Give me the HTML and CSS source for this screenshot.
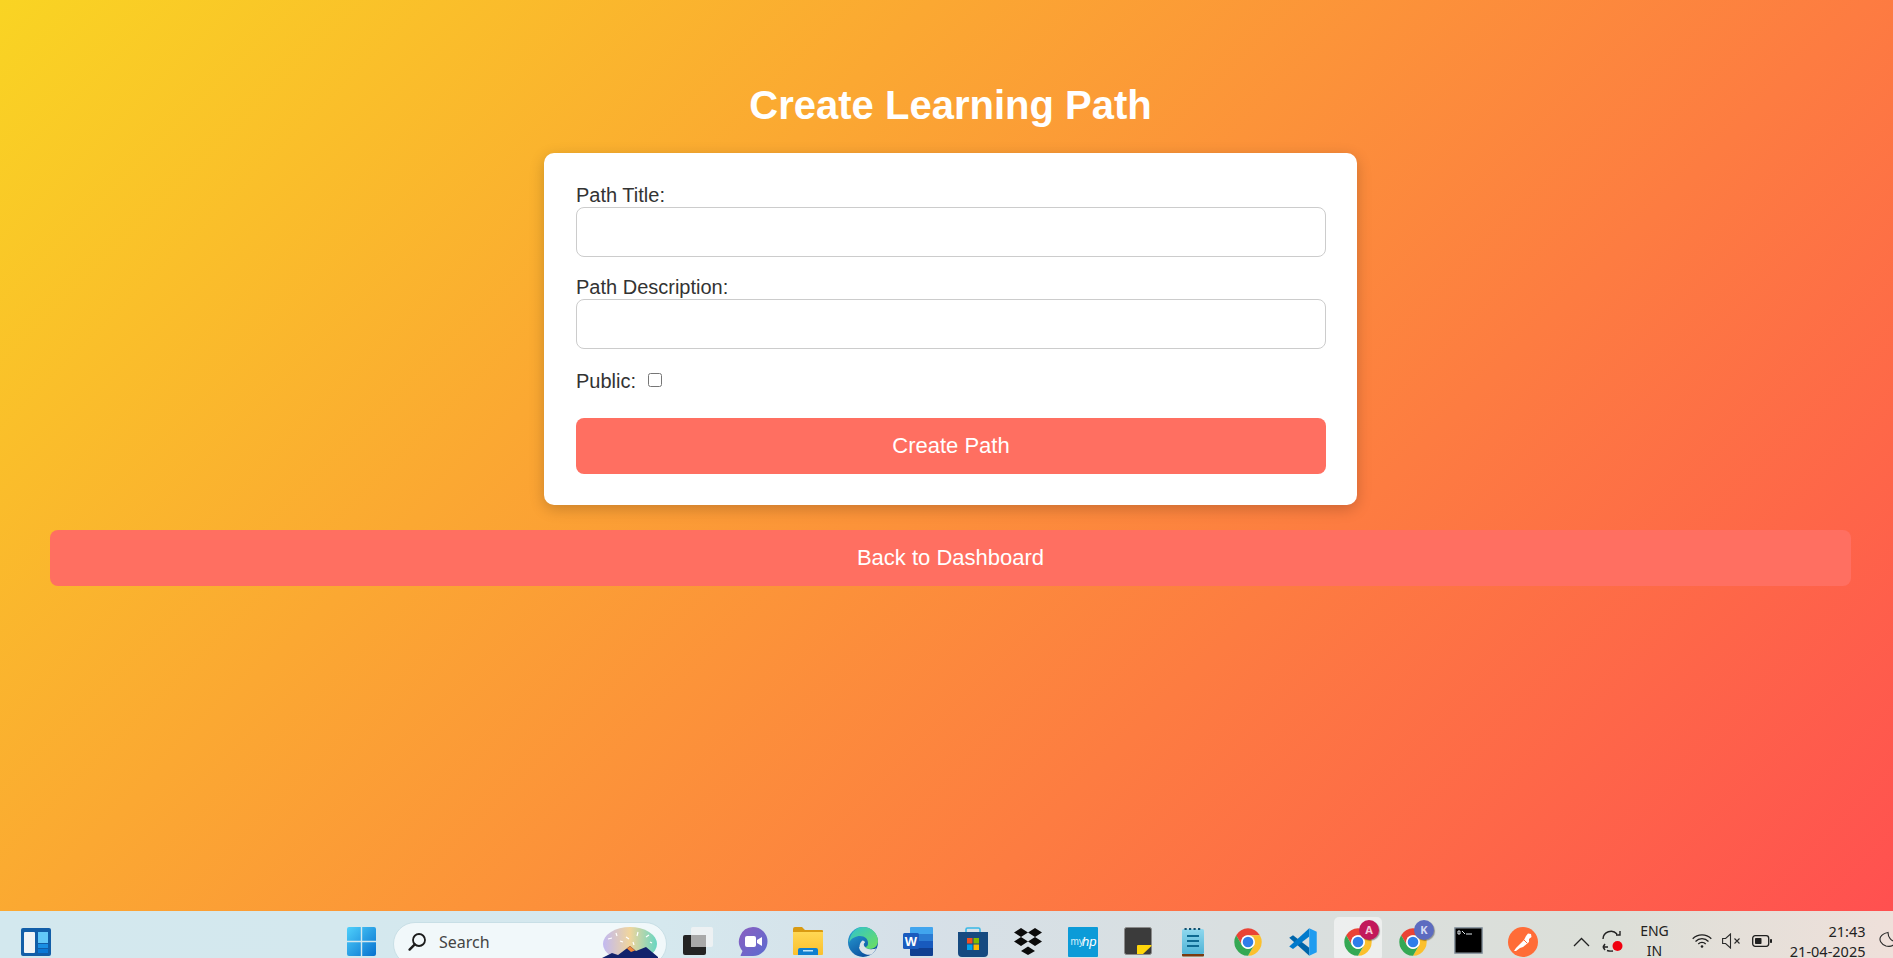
FILE: index.html
```html
<!DOCTYPE html>
<html lang="en">
<head>
  <meta charset="UTF-8">
  <title>Create Learning Path</title>
  <link rel="stylesheet" href="styles.css">
</head>
<body>

  <svg class="defs" width="0" height="0">
    <defs>
      <symbol id="chrome" viewBox="0 0 48 48">
        <path fill="#ea4335" d="M5 13A22 22 0 0 1 43 13H24A11 11 0 0 0 14.5 29.5Z"/>
        <path fill="#fbc02d" d="M43 13A22 22 0 0 1 24 46L33.5 29.5A11 11 0 0 0 24 13Z"/>
        <path fill="#34a853" d="M24 46A22 22 0 0 1 5 13L14.5 29.5A11 11 0 0 0 33.5 29.5Z"/>
        <circle cx="24" cy="24" r="11" fill="#fff"/>
        <circle cx="24" cy="24" r="8.5" fill="#2f7de9"/>
      </symbol>
      <linearGradient id="startBlue" x1="0" y1="0" x2="1" y2="1">
        <stop offset="0" stop-color="#4fd0fb"/>
        <stop offset="1" stop-color="#0671cf"/>
      </linearGradient>
      <linearGradient id="edgeBlue" x1="0" y1="0" x2="0.6" y2="1">
        <stop offset="0" stop-color="#2ba5d8"/>
        <stop offset="1" stop-color="#0a4f9e"/>
      </linearGradient>
      <linearGradient id="edgeGreen" x1="0" y1="0" x2="1" y2="1">
        <stop offset="0" stop-color="#2fc2d0"/>
        <stop offset="1" stop-color="#6fe05a"/>
      </linearGradient>
      <linearGradient id="folderFill" x1="0" y1="0" x2="0" y2="1">
        <stop offset="0" stop-color="#ffd754"/>
        <stop offset="1" stop-color="#fbc02d"/>
      </linearGradient>
      <linearGradient id="pageFill" x1="0" y1="0" x2="0" y2="1">
        <stop offset="0" stop-color="#8fd8ee"/>
        <stop offset="1" stop-color="#4fb3d6"/>
      </linearGradient>
      <linearGradient id="meetFill" x1="0" y1="0" x2="1" y2="1">
        <stop offset="0" stop-color="#8a5fc0"/>
        <stop offset="1" stop-color="#5b6bd0"/>
      </linearGradient>
      <linearGradient id="spark" x1="0" y1="0" x2="1" y2="0">
        <stop offset="0" stop-color="#b9aef0"/>
        <stop offset="0.5" stop-color="#f0cf8c"/>
        <stop offset="1" stop-color="#4fd0b8"/>
      </linearGradient>
    </defs>
  </svg>

  <main class="page">
    <h1 class="page-title">Create Learning Path</h1>

    <form class="form-card">
      <label class="field-label" for="path_title">Path Title:</label>
      <input class="field-input" id="path_title" type="text" name="title">

      <label class="field-label field-gap" for="path_desc">Path Description:</label>
      <input class="field-input" id="path_desc" type="text" name="description">

      <div class="public-row">
        <label class="public-label" for="is_public">Public:</label>
        <input class="public-check" id="is_public" type="checkbox" name="public">
      </div>

      <button class="action-btn" type="submit">Create Path</button>
    </form>

    <a class="action-btn back-link" href="#">Back to Dashboard</a>
  </main>

  <footer class="taskbar">
    <div class="widgets">
      <svg width="30" height="28" viewBox="0 0 30 28">
        <rect width="30" height="28" rx="2" fill="#125ea8"/>
        <rect x="3" y="4" width="11" height="21" rx="1" fill="#f1f4f6"/>
        <rect x="17" y="4" width="10" height="11" fill="#62c8f8"/>
        <rect x="17" y="16" width="10" height="4" fill="#1a8fe3"/>
        <rect x="17" y="21" width="10" height="4" fill="#0b78d6"/>
      </svg>
    </div>

    <div class="start-btn">
      <svg width="29" height="29" viewBox="0 0 29 29">
        <path fill="url(#startBlue)" d="M0 2a2 2 0 0 1 2-2h11.8v13.8H0zM15.2 0H27a2 2 0 0 1 2 2v11.8H15.2zM0 15.2h13.8V29H2a2 2 0 0 1-2-2zM15.2 15.2H29V27a2 2 0 0 1-2 2H15.2z"/>
      </svg>
    </div>

    <div class="search-box">
      <svg width="19" height="19" viewBox="0 0 19 19" fill="none" stroke="#1c1c1c">
        <circle cx="11" cy="8" r="6" stroke-width="1.8"/>
        <path d="M6.8 12.4 1.6 17.6" stroke-width="2.4" stroke-linecap="round"/>
      </svg>
      <span class="search-text">Search</span>
      <svg class="search-art" width="56" height="34" viewBox="0 0 56 34">
        <ellipse cx="28" cy="17" rx="27" ry="17" fill="url(#spark)" opacity="0.85"/>
        <path d="M6 12l4-1M14 6l1 3M24 10l3 2M36 5l-1 4M44 10l3-2M31 15l1 3M18 14l3 1M48 15l2 1" stroke="#fff" stroke-width="1.2"/>
        <path fill="#12226b" d="M0 31 10 26 16 28 28 19 34 24 44 20 56 30V34H0Z"/>
        <path fill="#f08a3c" d="M25 21.500 28 19 33 23.500 29 25Z"/>
      </svg>
    </div>

    <div class="apps">
      <div class="app">
        <div class="app-inner">
          <svg width="30" height="28" viewBox="0 0 30 28">
            <rect x="0" y="8" width="23" height="20" rx="2" fill="#232323"/>
            <rect x="8" y="0" width="22" height="20" rx="2" fill="#f4f4f4" opacity="0.75"/>
            <rect x="8" y="8" width="15" height="12" fill="#a9a9a9"/>
          </svg>
        </div>
      </div>

      <div class="app">
        <div class="app-inner">
          <svg width="30" height="30" viewBox="0 0 30 30">
            <path fill="url(#meetFill)" d="M15 0a14.500 14.500 0 0 1 0 29H3.500Q2 29 3 27.500L4.500 24A14.500 14.500 0 0 1 15 0Z"/>
            <rect x="7" y="9" width="11" height="11" rx="2" fill="#fff"/>
            <path fill="#fff" d="M19 13l5-3v9l-5-3z"/>
          </svg>
        </div>
      </div>

      <div class="app">
        <div class="app-inner">
          <svg width="30" height="28" viewBox="0 0 30 28">
            <path fill="#d99a12" d="M0 2a2 2 0 0 1 2-2h7l3 3h17a1 1 0 0 1 1 1v5H0z"/>
            <path fill="url(#folderFill)" d="M0 5h30v22a1 1 0 0 1-1 1H1a1 1 0 0 1-1-1z"/>
            <path fill="#0f7fcf" d="M5 28v-5a2 2 0 0 1 2-2h16a2 2 0 0 1 2 2v5z"/>
            <rect x="10" y="23" width="10" height="1.500" fill="#bfe4f7"/>
          </svg>
        </div>
      </div>

      <div class="app">
        <div class="app-inner">
          <svg width="30" height="30" viewBox="0 0 30 30">
            <circle cx="15" cy="15" r="15" fill="url(#edgeBlue)"/>
            <path fill="url(#edgeGreen)" d="M15 0c8 0 15 6 15 14 0 5-4 8-8 8-3 0-5-1-5-2 2 0 3-1.500 3-4 0-4-3-7-8-7-4 0-9 2-11 7C2 6 8 0 15 0Z"/>
            <path fill="#dbe3e8" d="M11.500 20c0-3 1-5 3-6.500 1.500 0 2.500 1 2.500 2-1 .5-1.500 1.500-1 3 1 3 5 4.500 9 3.500 2 0 3-.5 3.500-1-1.500 3-3 5-5 6.500-5 1.500-12-2-12.500-7.500Z"/>
          </svg>
        </div>
      </div>

      <div class="app">
        <div class="app-inner">
          <svg width="30" height="29" viewBox="0 0 30 29">
            <rect x="7" y="0" width="23" height="8" rx="1" fill="#41a5ee"/>
            <rect x="7" y="7" width="23" height="7" fill="#2b7cd3"/>
            <rect x="7" y="14" width="23" height="7" fill="#185abd"/>
            <path fill="#103f91" d="M7 21h23v7a1 1 0 0 1-1 1H8a1 1 0 0 1-1-1z"/>
            <rect x="0" y="6" width="16" height="16" rx="1.500" fill="#1a5bbe"/>
            <text class="word-letter" x="8" y="18.500" text-anchor="middle">W</text>
          </svg>
        </div>
      </div>

      <div class="app">
        <div class="app-inner">
          <svg width="30" height="30" viewBox="0 0 30 30">
            <path fill="none" stroke="#39b8e6" stroke-width="1.600" d="M8 5V2.500Q8 1 9.500 1h11Q22 1 22 2.500V5"/>
            <path fill="#164a80" d="M0 5h30v21a4 4 0 0 1-4 4H4a4 4 0 0 1-4-4z"/>
            <rect x="9" y="11" width="5.500" height="5.500" fill="#f25022"/>
            <rect x="15.500" y="11" width="5.500" height="5.500" fill="#7fba00"/>
            <rect x="9" y="17.500" width="5.500" height="5.500" fill="#00a4ef"/>
            <rect x="15.500" y="17.500" width="5.500" height="5.500" fill="#ffb900"/>
          </svg>
        </div>
      </div>

      <div class="app">
        <div class="app-inner">
          <svg width="30" height="28" viewBox="0 0 30 28">
            <path fill="#0b0b0b" d="M8 1 15 5.500 8 10 1 5.500ZM22 1 29 5.500 22 10 15 5.500ZM8 10 15 14.500 8 19 1 14.500ZM22 10 29 14.500 22 19 15 14.500ZM15 19.500 22 24 15 28 8 24Z"/>
          </svg>
        </div>
      </div>

      <div class="app">
        <div class="app-inner">
          <svg width="30" height="30" viewBox="0 0 30 30">
            <rect width="30" height="30" rx="1" fill="#0c9bd8"/>
            <text class="hp-my" x="2.500" y="18">my</text>
            <text class="hp-hp" x="14" y="19">hp</text>
          </svg>
        </div>
      </div>

      <div class="app">
        <div class="app-inner">
          <svg width="28" height="28" viewBox="0 0 28 28">
            <rect x="0.500" y="0.500" width="27" height="27" rx="2" fill="#3b3b3b" stroke="#8a8a8a"/>
            <path fill="#ffd60a" d="M13 27V19a1 1 0 0 1 1-1h13.500V19L19 27Z"/>
          </svg>
        </div>
      </div>

      <div class="app">
        <div class="app-inner">
          <svg width="22" height="30" viewBox="0 0 22 30">
            <rect y="2" width="22" height="25" rx="1.500" fill="url(#pageFill)"/>
            <path fill="#7a3b10" d="M0 27h22v1.500a1 1 0 0 1-1 1H1a1 1 0 0 1-1-1z"/>
            <path stroke="#14506f" stroke-width="2" stroke-dasharray="2.200 2.300" d="M2.500 2h18"/>
            <path stroke="#0d6a92" stroke-width="2" d="M5 9h12M5 14h12M5 19h12"/>
          </svg>
        </div>
      </div>

      <div class="app">
        <div class="app-inner">
          <svg width="30" height="30"><use href="#chrome"/></svg>
        </div>
      </div>

      <div class="app">
        <div class="app-inner">
          <svg width="30" height="30" viewBox="0 0 24 24">
            <path fill="#0065a9" d="M17 23V16.500L4 6.500 1 8.500Z"/>
            <path fill="#007acc" d="M17 1V7.500L4 17.500 1 15.500Z"/>
            <path fill="#1f9cf0" d="M17 1 23 3.800V20.200L17 23Z"/>
          </svg>
        </div>
      </div>

      <div class="app">
        <div class="app-inner app-active">
          <svg width="30" height="30"><use href="#chrome"/></svg>
          <span class="badge badge-a">A</span>
        </div>
      </div>

      <div class="app">
        <div class="app-inner">
          <svg width="30" height="30"><use href="#chrome"/></svg>
          <span class="badge badge-k">K</span>
        </div>
      </div>

      <div class="app">
        <div class="app-inner">
          <svg width="29" height="27" viewBox="0 0 29 27">
            <rect width="29" height="27" rx="1" fill="#8e9aa3"/>
            <rect x="1.500" y="1.500" width="26" height="24" fill="#000"/>
            <path stroke="#dfe6ea" stroke-width="1" fill="none" d="M4 4h2v3H4zM8 4l3 3M12 7h6"/>
          </svg>
        </div>
      </div>

      <div class="app">
        <div class="app-inner">
          <svg width="30" height="30" viewBox="0 0 30 30">
            <circle cx="15" cy="15" r="15" fill="#ff6c37"/>
            <path fill="#fff" d="M6 24 8 21 16 13 18 9 20 6.500 23 7 23.500 10 21 12 21 15 15 20 12 21 8 24Z"/>
            <path stroke="#ff6c37" stroke-width="1" d="M16 13l3 3"/>
          </svg>
        </div>
      </div>
    </div>

    <div class="tray">
      <svg class="tray-caret" width="17" height="10" viewBox="0 0 17 10" fill="none" stroke="#222" stroke-width="1.300">
        <path d="M1 9 8.500 1.500 16 9"/>
      </svg>

      <svg class="tray-sync" width="21" height="22" viewBox="0 0 21 22" fill="none" stroke="#222" stroke-width="1.400">
        <path d="M1 9A8 8 0 0 1 15 4M18 1v4h-4M1 17h5M1 17l2-3M3 20l-2-3M5 20.500q3 1 6 .5"/>
        <circle cx="15.500" cy="16" r="5" fill="#f0000f" stroke="none"/>
      </svg>

      <div class="tray-lang">
        <span>ENG</span>
        <span>IN</span>
      </div>

      <svg class="tray-wifi" width="20" height="14" viewBox="0 0 20 14" fill="none" stroke="#1f1f1f" stroke-width="1.300">
        <path d="M.7 4.700a13 13 0 0 1 18.600 0M3.500 7.500a9 9 0 0 1 13 0M6.300 10a5 5 0 0 1 7.400 0"/>
        <circle cx="10" cy="12.500" r="1.300" fill="#1f1f1f" stroke="none"/>
      </svg>

      <svg class="tray-sound" width="19" height="16" viewBox="0 0 19 16" fill="none" stroke="#2a2a2a" stroke-width="1.100">
        <path d="M.6 5.500h3L8.500 1v14L3.600 10.500h-3z"/>
        <path d="M12.500 5.500l5 5M17.500 5.500l-5 5"/>
      </svg>

      <svg class="tray-battery" width="20" height="12" viewBox="0 0 20 12">
        <rect x="0.700" y="0.700" width="16" height="10.600" rx="2.500" fill="none" stroke="#1f1f1f" stroke-width="1.300"/>
        <rect x="3" y="3" width="6.500" height="6" rx="0.800" fill="#1f1f1f"/>
        <rect x="18" y="4" width="2" height="4" rx="0.800" fill="#1f1f1f"/>
      </svg>

      <div class="tray-clock">
        <span>21:43</span>
        <span>21-04-2025</span>
      </div>

      <svg class="tray-moon" width="18" height="18" viewBox="0 0 18 18" fill="none" stroke="#2a2a2a" stroke-width="1.100">
        <path d="M9 1.500C9 6 12 10 17 11 15 14.500 11 16 7 15 2 13.500 0 9 1.500 6 3 3.500 6 2 9 1.500Z"/>
      </svg>
    </div>
  </footer>

</body>
</html>
```

FILE: styles.css
```css
* {
  margin: 0;
  padding: 0;
  box-sizing: border-box;
}

html,
body {
  height: 100%;
  overflow: hidden;
}

body {
  display: flex;
  flex-direction: column;
  font-family: "Liberation Sans", Arial, sans-serif;
}

.defs {
  position: absolute;
}

.page {
  flex: 1;
  padding: 82px 42px 0 50px;
  background: linear-gradient(135deg, #f9d423, #ff5050);
}

.page-title {
  text-align: center;
  font-size: 40px;
  line-height: 46px;
  font-weight: 700;
  color: #fff;
  margin-bottom: 25px;
}

.form-card {
  width: 813px;
  height: 352px;
  margin: 0 auto 25px;
  padding: 32px 31px 32px 32px;
  background: #fff;
  border-radius: 10px;
  box-shadow: 0 4px 15px rgba(0, 0, 0, 0.2);
}

.field-label {
  display: block;
  margin-bottom: 2px;
  font-size: 20px;
  line-height: 20px;
  color: #333;
}

.field-input {
  display: block;
  width: 100%;
  height: 50px;
  border: 1px solid #ccc;
  border-radius: 8px;
  background: #fff;
}

.field-gap {
  margin-top: 20px;
}

.public-row {
  display: flex;
  align-items: center;
  gap: 12px;
  margin-top: 21px;
  margin-bottom: 26px;
}

.public-label {
  font-size: 20px;
  line-height: 22px;
  color: #333;
}

.public-check {
  width: 14px;
  height: 14px;
  margin: 0 0 3px;
}

.action-btn {
  display: block;
  width: 100%;
  height: 56px;
  line-height: 56px;
  text-align: center;
  font-family: inherit;
  font-size: 22px;
  color: #fff;
  text-decoration: none;
  background: #ff6f61;
  border: none;
  border-radius: 8px;
}

/* taskbar, the bottom of it is cut off by the window */
.taskbar {
  display: flex;
  height: 47px;
  overflow: hidden;
  background: linear-gradient(90deg, #d3e8ee 0%, #d5e8ee 35%, #d6e0e8 48%, #d9dfe0 65%, #dcdfd8 85%, #efe0da 100%);
  font-family: "Noto Sans", sans-serif;
  color: #222;
}

.taskbar > * {
  flex: none;
}

.widgets {
  margin: 17px 0 0 21px;
}

.start-btn {
  margin: 16px 0 0 296px;
}

.search-box {
  display: flex;
  align-items: flex-start;
  width: 274px;
  height: 44px;
  margin: 11px 0 0 17px;
  padding: 9px 8px 0 14px;
  background: #f1f8fa;
  border: 1px solid #c8dfe6;
  border-radius: 22px;
}

.search-text {
  margin-left: 12px;
  font-size: 16px;
  line-height: 20px;
  color: #444;
}

.search-art {
  margin: -5px 0 0 auto;
}

.apps {
  display: flex;
  margin-left: 3.5px;
}

.app {
  display: flex;
  justify-content: center;
  width: 55px;
}

.app-inner {
  position: relative;
  display: flex;
  justify-content: center;
  align-items: flex-start;
  width: 48px;
  height: 44px;
  margin-top: 6px;
  padding-top: 10px;
  border-radius: 5px;
}

.app-active {
  background: rgba(255, 255, 255, 0.5);
}

.word-letter {
  font: 700 13px "Liberation Sans", sans-serif;
  fill: #fff;
}

.hp-my {
  font: 10px "Liberation Sans", sans-serif;
  fill: #d7f0fb;
}

.hp-hp {
  font: italic 13px "Liberation Sans", sans-serif;
  fill: #fff;
}

.badge {
  position: absolute;
  top: 3px;
  left: 25px;
  width: 20px;
  height: 20px;
  border-radius: 50%;
  font: 700 11px/20px "Noto Sans", sans-serif;
  text-align: center;
  box-shadow: 1px 1px 1px rgba(0, 0, 0, 0.35);
}

.badge-a {
  background: #c2185b;
  color: #f6c6d8;
}

.badge-k {
  background: #5c6bc0;
  color: #d6dbf3;
}

.tray {
  display: flex;
  align-items: flex-start;
  margin-left: 22px;
}

.tray > * {
  flex: none;
}

.tray-caret {
  margin: 26px 0 0 0;
}

.tray-sync {
  margin: 19px 0 0 12px;
}

.tray-lang {
  display: flex;
  flex-direction: column;
  align-items: center;
  width: 44px;
  margin: 10px 0 0 10px;
  font-size: 14px;
  line-height: 20px;
}

.tray-wifi {
  margin: 23px 0 0 15px;
}

.tray-sound {
  margin: 22px 0 0 10px;
}

.tray-battery {
  margin: 24px 0 0 11px;
}

.tray-clock {
  display: flex;
  flex-direction: column;
  align-items: flex-end;
  width: 94px;
  margin: 10px 0 0 0;
  font-size: 14.5px;
  line-height: 20px;
}

.tray-moon {
  margin: 20px 0 0 13px;
}
```
